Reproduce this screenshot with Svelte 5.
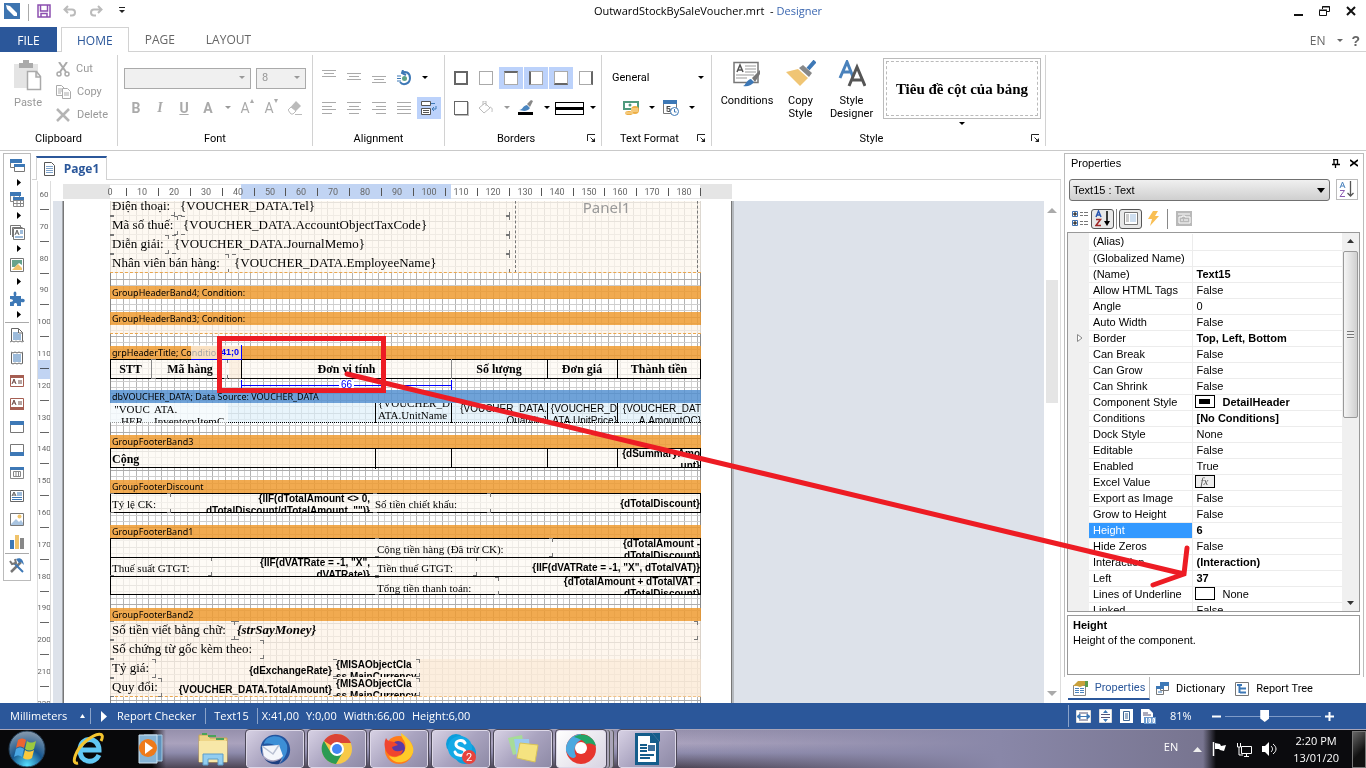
<script lang="ts">
  type Item = {
    text: string;
    x: number;
    y: number;
    w: number;
    h: number;
    kind?: string;
  };

  type Band = {
    name: string;
    gap: number;
    body: number;
    tone?: string;
    boxed?: boolean;
    items: Item[];
  };

  const bands: Band[] = [
    { name: 'GroupHeaderBand4; Condition:', gap: 13, body: 0, items: [] },
    { name: 'GroupHeaderBand3; Condition:', gap: 13, body: 9, items: [] },
    {
      name: 'grpHeaderTitle; Condition:', gap: 12, body: 20, boxed: true,
      items: [
        { text: 'STT', x: 0, y: 0, w: 42, h: 20, kind: 'title soft' },
        { text: 'Mã hàng', x: 42, y: 0, w: 76, h: 20, kind: 'title marks' },
        { text: '', x: 119, y: 0, w: 12, h: 20, kind: 'empty' },
        { text: 'Đơn vị tính', x: 131, y: 0, w: 211, h: 20, kind: 'title soft first' },
        { text: 'Số lượng', x: 341, y: 0, w: 97, h: 20, kind: 'title line' },
        { text: 'Đơn giá', x: 437, y: 0, w: 71, h: 20, kind: 'title line' },
        { text: 'Thành tiền', x: 507, y: 0, w: 84, h: 20, kind: 'title' }
      ]
    },
    {
      name: 'dbVOUCHER_DATA; Data Source: VOUCHER_DATA', gap: 11, body: 20, tone: 'data',
      items: [
        { text: '"VOUC HER', x: 0, y: 0, w: 42, h: 20, kind: 'serif center tall' },
        { text: 'ATA. InventoryItemC', x: 42, y: 0, w: 76, h: 20, kind: 'serif tall' },
        { text: '{VOUCHER_D ATA.UnitName', x: 265, y: 0, w: 77, h: 20, kind: 'serif up line first' },
        { text: '{VOUCHER_DATA. Quantity}', x: 341, y: 0, w: 97, h: 20, kind: 'sans line' },
        { text: '{VOUCHER_D ATA.UnitPrice}', x: 437, y: 0, w: 71, h: 20, kind: 'sans line' },
        { text: '{VOUCHER_DAT A.AmountOC}', x: 507, y: 0, w: 84, h: 20, kind: 'sans' }
      ]
    },
    {
      name: 'GroupFooterBand3', gap: 12, body: 20, boxed: true,
      items: [
        { text: 'Cộng', x: 0, y: 1, w: 266, h: 20, kind: 'total line' },
        { text: '', x: 265, y: 0, w: 77, h: 20, kind: 'line' },
        { text: '', x: 341, y: 0, w: 97, h: 20, kind: 'line' },
        { text: '', x: 437, y: 0, w: 71, h: 20, kind: 'line' },
        { text: '{dSummaryAmo unt}', x: 507, y: 0, w: 84, h: 20, kind: 'bold' }
      ]
    },
    {
      name: 'GroupFooterDiscount', gap: 12, body: 20, boxed: true,
      items: [
        { text: 'Tỷ lệ CK:', x: 0, y: 0, w: 61, h: 20, kind: 'small marks' },
        { text: '{IIF(dTotalAmount <> 0, dTotalDiscount/dTotalAmount, "")}', x: 61, y: 0, w: 200, h: 20, kind: 'bold' },
        { text: 'Số tiền chiết khấu:', x: 263, y: 0, w: 118, h: 20, kind: 'small marks' },
        { text: '{dTotalDiscount}', x: 381, y: 0, w: 210, h: 20, kind: 'bold mid' }
      ]
    },
    {
      name: 'GroupFooterBand1', gap: 12, body: 57, boxed: true,
      items: [
        { text: 'Cộng tiền hàng (Đã trừ CK):', x: 265, y: 0, w: 178, h: 19, kind: 'small marks bound' },
        { text: '{dTotalAmount - dTotalDiscount}', x: 443, y: 0, w: 148, h: 19, kind: 'bold' },
        { text: 'Thuế suất GTGT:', x: 0, y: 19, w: 102, h: 19, kind: 'small marks' },
        { text: '{IIF(dVATRate = -1, "X", dVATRate)}', x: 132, y: 19, w: 129, h: 19, kind: 'bold' },
        { text: 'Tiền thuế GTGT:', x: 265, y: 19, w: 102, h: 19, kind: 'small marks' },
        { text: '{IIF(dVATRate = -1, "X", dTotalVAT)}', x: 367, y: 19, w: 224, h: 19, kind: 'bold mid' },
        { text: '', x: 0, y: 19, w: 591, h: 20, kind: 'row' },
        { text: 'Tổng tiền thanh toán:', x: 265, y: 39, w: 124, h: 18, kind: 'small marks' },
        { text: '{dTotalAmount + dTotalVAT - dTotalDiscount}', x: 389, y: 38, w: 202, h: 18, kind: 'bold' }
      ]
    },
    {
      name: 'GroupFooterBand2', gap: 13, body: 76,
      items: [
        { text: 'Số tiền viết bằng chữ:', x: 0, y: 0, w: 125, h: 19, kind: 'field marks' },
        { text: '{strSayMoney}', x: 125, y: 0, w: 463, h: 19, kind: 'field say marks' },
        { text: 'Số chứng từ gốc kèm theo:', x: 0, y: 19, w: 154, h: 19, kind: 'field marks' },
        { text: 'Tỷ giá:', x: 0, y: 38, w: 46, h: 19, kind: 'field marks' },
        { text: '{dExchangeRate}', x: 46, y: 39, w: 177, h: 19, kind: 'bold mid' },
        { text: '{MISAObjectCla ss.MainCurrency', x: 223, y: 38, w: 87, h: 18, kind: 'bold left marks' },
        { text: '', x: 310, y: 38, w: 281, h: 38, kind: 'empty' },
        { text: 'Quy đổi:', x: 0, y: 57, w: 52, h: 19, kind: 'field marks' },
        { text: '{VOUCHER_DATA.TotalAmount}', x: 52, y: 58, w: 171, h: 19, kind: 'bold mid' },
        { text: '{MISAObjectCla ss.MainCurrency', x: 223, y: 57, w: 87, h: 18, kind: 'bold left marks' }
      ]
    }
  ];

  const fields = [
    { label: 'Điện thoại:', value: '{VOUCHER_DATA.Tel}', x: 68 },
    { label: 'Mã số thuế:', value: '{VOUCHER_DATA.AccountObjectTaxCode}', x: 71 },
    { label: 'Diễn giải:', value: '{VOUCHER_DATA.JournalMemo}', x: 62 },
    { label: 'Nhân viên bán hàng:', value: '{VOUCHER_DATA.EmployeeName}', x: 122 }
  ];

  const properties = [
    ['(Alias)', ''],
    ['(Globalized Name)', ''],
    ['(Name)', 'Text15', 'b'],
    ['Allow HTML Tags', 'False'],
    ['Angle', '0'],
    ['Auto Width', 'False'],
    ['Border', 'Top, Left, Bottom', 'b'],
    ['Can Break', 'False'],
    ['Can Grow', 'False'],
    ['Can Shrink', 'False'],
    ['Component Style', 'DetailHeader', 'b', 'style'],
    ['Conditions', '[No Conditions]', 'b'],
    ['Dock Style', 'None'],
    ['Editable', 'False'],
    ['Enabled', 'True'],
    ['Excel Value', '', '', 'fx'],
    ['Export as Image', 'False'],
    ['Grow to Height', 'False'],
    ['Height', '6', 'b'],
    ['Hide Zeros', 'False'],
    ['Interaction', '(Interaction)', 'b'],
    ['Left', '37', 'b'],
    ['Lines of Underline', 'None', '', 'empty'],
    ['Linked', 'False']
  ];

  // one millimetre on the sheet at 81 %
  const mm = 3.19;
  const hTicks = Array.from({ length: 19 }, (_, i) => i * 10);
  const vTicks = Array.from({ length: 17 }, (_, i) => 60 + i * 10);
  const cols = Array.from({ length: 93 }, (_, i) => i);
  const rows = Array.from({ length: 80 }, (_, i) => i);

  const tools = ['bands', 'cross', 'pages', 'image', 'puzzle'];
  const elements = ['header', 'footer', 'texta', 'textb', 'top', 'bottom', 'panel', 'rich', 'picture', 'chart'];
  const edges = ['all', 'none', 'top', 'left', 'bottom', 'right'];
  const apps = ['thunderbird', 'chrome', 'firefox', 'skype', 'notes', 'misa', 'writer'];

  let selected = $state('Height');
</script>

{#snippet caret()}
  <svg class="caret" width="6" height="4" viewBox="0 0 6 4"><path d="M0 0h6L3 3z" fill="currentColor" /></svg>
{/snippet}

{#snippet launcher()}
  <button class="launcher" aria-label="More options">
    <svg width="9" height="9" viewBox="0 0 9 9"><path d="M.5 7V.5H8" fill="none" stroke="#222" /><path d="M3.500 3.500L7 7" stroke="#222" /><path d="M8 4v4H4z" fill="#222" /></svg>
  </button>
{/snippet}

{#snippet lines(kind: string)}
  <svg width="14" height="12" viewBox="0 0 14 12" stroke="#aaa">
    {#if kind === 'short'}
      <path d="M0 1.5h14M2 4.5h10M0 7.5h14" />
    {:else if kind === 'left'}
      <path d="M0 .5h14M0 4.5h10M0 7.5h14M0 11.5h10" />
    {:else if kind === 'center'}
      <path d="M0 .5h14M2 4.5h10M0 7.5h14M2 11.5h10" />
    {:else if kind === 'right'}
      <path d="M0 .5h14M4 4.5h10M0 7.5h14M4 11.5h10" />
    {:else}
      <path d="M0 .5h14M0 4.5h14M0 7.5h14M0 11.5h14" />
    {/if}
  </svg>
{/snippet}

{#snippet tool(name: string)}
  <svg width="16" height="16" viewBox="0 0 16 16" fill="none">
    {#if name === 'bands'}
      <path d="M1.500 9V1.500h11V5" stroke="#777" /><path d="M1 1h12v4H1z" fill="#3d78b6" /><path d="M1.500 5v4.500H5" stroke="#777" />
      <path d="M5.500 6.500h10v7h-10z" fill="#fff" stroke="#777" /><path d="M5 6h11v3H5z" fill="#3d78b6" />
    {:else if name === 'cross'}
      <path d="M1.500 4.500h9v6h-9zM5 4v6" fill="#fff" stroke="#888" /><path d="M1 1h11v4H1zM4 6h11v4H4z" fill="#3d78b6" />
      <path d="M4.500 9.500h10v6h-10zM4 12.500h11M8 9v6M11.500 9v6" fill="#fff" stroke="#888" />
    {:else if name === 'pages'}
      <path d="M1.500 11V1.500h10v3M3.500 13V3.500h10" stroke="#777" /><path d="M4.500 4.500h11v11h-11z" fill="#fff" stroke="#777" />
      <path d="M6 11l2-5 2 5M7 9h2" stroke="#666" /><path d="M11 7h3M11 9h3M6 13h8" stroke="#3d78b6" />
    {:else if name === 'image'}
      <path d="M1.500 1.500h13v13h-13z" fill="#fff" stroke="#777" /><path d="M3 3h10v5L10 6 6 10H3z" fill="#66a38c" /><path d="M3 13l6-6 4 4v2z" fill="#f0c36b" />
    {:else if name === 'puzzle'}
      <path d="M1 6h4c-2-6 4-6 2 0h5v3c5-2 5 5 0 3v4H8c1-4-4-4-3 0H1v-4c4 0 4-3 0-3z" fill="#3d78b6" />
    {:else if name === 'header'}
      <path d="M2.500 14V1.500h7l4 4V14M9.500 2v4H14" stroke="#666" /><path d="M4 6h5M4 8h8M4 10h8M4 12h8" stroke="#3d78b6" /><path d="M1 15l2-1 2 1 2-1 2 1 2-1 2 1 2-1" stroke="#777" />
    {:else if name === 'footer'}
      <path d="M2.500 3v10M13.500 3v10M2 2l2 1 2-1 2 1 2-1 2 1 2-1M2 13l2 1 2-1 2 1 2-1 2 1 2-1" stroke="#666" /><path d="M4 5h8M4 7h8M4 9h8M4 11h8" stroke="#3d78b6" />
    {:else if name === 'texta' || name === 'textb'}
      <path d="M1.500 2.500h13v11h-13z" fill="#fff" stroke="#a65e52" /><path d={name === 'texta' ? 'M1 2h14v3H1z' : 'M1 11h14v3H1z'} fill="#a65e52" />
      <path d={name === 'texta' ? 'M3 11l2-5 2 5M4 9h2M9 8h4M9 10h4' : 'M3 9l2-5 2 5M4 7h2M9 6h4M9 8h4'} stroke="#6d4a45" />
    {:else if name === 'top' || name === 'bottom'}
      <path d="M1.500 2.500h13v11h-13z" fill="#fff" stroke="#777" /><path d={name === 'top' ? 'M1 2h14v4H1z' : 'M1 10h14v4H1z'} fill="#3d78b6" />
    {:else if name === 'panel'}
      <path d="M1.500 2.500h13v11h-13zM4.500 6.500h7v5h-7zM7 6v5M9.500 6v5" fill="#fff" stroke="#888" /><path d="M1 2h14v3H1z" fill="#3d78b6" />
    {:else if name === 'rich'}
      <path d="M1.500 2.500h13v11h-13z" fill="#fff" stroke="#666" /><path d="M3 8l2-4 2 4M4 7h2" stroke="#555" /><path d="M8 5h5M8 7h5M3 9.500h10M3 11.500h10" stroke="#3d78b6" />
    {:else if name === 'picture'}
      <path d="M1.500 2.500h13v12h-13z" fill="#fff" stroke="#777" /><circle cx="10.500" cy="5.500" r="2" fill="#f0c36b" /><path d="M2 13l5-5 3 3 2-2 2 3v2H2z" fill="#a9c4e0" />
    {:else if name === 'chart'}
      <path d="M1 6h4v9H1z" fill="#3d78b6" /><path d="M6 1h4v14H6z" fill="#f0c36b" /><path d="M11 4h4v11h-4z" fill="#888" />
    {:else}
      <path d="M2 14L12 4" stroke="#777" stroke-width="2.500" /><path d="M5 5l9 9" stroke="#3d78b6" stroke-width="2" /><path d="M7 1c5-2 7 1 8 6l-3-3-2 1z" fill="#3d78b6" /><path d="M1 3l2 3 4-1-1-4" stroke="#777" stroke-width="2" />
    {/if}
  </svg>
{/snippet}

{#snippet app(name: string)}
  <svg width="32" height="32" viewBox="0 0 32 32">
    {#if name === 'thunderbird'}
      <path d="M10 3c9-4 20 1 21 12 1 8-4 14-11 16 3-3 5-6 5-9L4 14c-1 4-1 7 1 11C-1 17 1 8 10 3z" fill="#24549e" />
      <path d="M9 5c8-4 16-1 19 7 1 6-1 11-5 16-1-6-2-12-6-15-3-2-7-3-12-2 0-2 2-5 4-6z" fill="#3d8fd6" />
      <path d="M3 13l17-1 4 11c-4 5-14 6-19 0z" fill="#f4f6fb" /><path d="M3 13l11 8 6-9" fill="none" stroke="#b9c0d2" stroke-width="1.500" />
      <path d="M5 25c5 5 12 5 18 0l-3 6c-6 1-12-1-15-6z" fill="#1d3f80" />
    {:else if name === 'chrome'}
      <circle cx="16" cy="16" r="15" fill="#f7c948" /><path d="M16 16L3 8C9-2 25-1 30 10H16z" fill="#db4437" />
      <path d="M3 8C-3 17 3 30 15 31l7-12-12 1z" fill="#2b9b53" /><circle cx="16" cy="16" r="7" fill="#fff" /><circle cx="16" cy="16" r="5" fill="#4285f4" />
    {:else if name === 'firefox'}
      <circle cx="16" cy="17" r="14" fill="#ff7b1a" /><path d="M18 0c10 7 15 15 11 22-5 9-18 10-23 1 9 4 19-3 16-13-1-4-4-5-4-10z" fill="#ffc928" />
      <circle cx="15" cy="15" r="7" fill="#5a3aa5" /><path d="M3 5c2 4 5 3 8 4l4 3-6 2c1 5 6 5 11 3-2 8-13 9-17 1-2-5-2-9 0-13z" fill="#f0452e" />
    {:else if name === 'skype'}
      <circle cx="11" cy="11" r="10" fill="#0c9ddb" /><circle cx="20" cy="20" r="11" fill="#0c9ddb" /><circle cx="15" cy="15" r="12" fill="#14a9e6" />
      <path d="M20 10c-2-4-10-3-9 2s9 2 9 7c-1 5-9 4-10 0" fill="none" stroke="#fff" stroke-width="3" stroke-linecap="round" />
      <circle cx="24" cy="24" r="7" fill="#e8433c" /><text x="24" y="28" text-anchor="middle" class="badge">2</text>
    {:else if name === 'notes'}
      <path d="M1 5l14-3 3 16-12 4z" fill="#a7dc97" /><path d="M7 6h15l1 16-13 3z" fill="#9cc9ed" /><path d="M13 10l18 2-3 17-18-4z" fill="#f5e380" stroke="#d9c456" />
    {:else if name === 'misa'}
      <circle cx="16" cy="16" r="15" fill="#e7352d" /><path d="M16 1c-9 0-16 8-15 17 3 7 8 9 10 5-3-7-1-13 5-16z" fill="#4ba8df" />
      <path d="M9 4c8-6 20-1 22 9-6-4-9-2-10-2C18 7 13 5 9 4z" fill="#22a567" /><circle cx="16" cy="15" r="6" fill="#fff" />
    {:else if name === 'writer'}
      <path d="M4 0h17l7 8v24H4z" fill="#155d8b" /><path d="M7 3h12v7h6v19H7z" fill="#fff" /><path d="M21 0h8v9z" fill="#155d8b" />
      <path d="M9 12h7M9 15h7M9 18h7M9 22h14M9 25h10" stroke="#155d8b" stroke-width="2" /><path d="M17 12h7v6h-7z" fill="#3a6f9c" />
    {/if}
  </svg>
{/snippet}

<div class="window">
  <header class="titlebar">
    <div class="quick">
      <svg width="16" height="16" viewBox="0 0 16 16"><path d="M0 0h16v16H0z" fill="#3d74b0" /><path d="M2 2l4 1 7 7 0 3-3 0-7-7z" fill="#fff" /></svg>
      <i class="split"></i>
      <button aria-label="Save">
        <svg width="14" height="14" viewBox="0 0 14 14" fill="none" stroke="#8c4fb0" stroke-width="1.500"><path d="M1 1h12v12H1zM3.500 1v6h7V1M4 13V9.500h6V13" /></svg>
      </button>
      <button aria-label="Undo">
        <svg width="14" height="12" viewBox="0 0 14 12" fill="none" stroke="#bbb" stroke-width="2"><path d="M5 1L1.500 4.500 5 8M2 4.500h7c4 0 4 6 0 6H7" /></svg>
      </button>
      <button aria-label="Redo">
        <svg width="14" height="12" viewBox="0 0 14 12" fill="none" stroke="#bbb" stroke-width="2"><path d="M9 1l3.500 3.500L9 8M12 4.500H5c-4 0-4 6 0 6h2" /></svg>
      </button>
      <button class="more" aria-label="Customize">
        <svg width="6" height="7" viewBox="0 0 6 7"><path d="M0 .5h6" stroke="#222" /><path d="M0 3h6L3 6z" fill="#222" /></svg>
      </button>
    </div>
    <h1>OutwardStockBySaleVoucher.mrt <span>&nbsp;- <em>Designer</em></span></h1>
    <div class="controls">
      <button aria-label="Minimize"><svg width="9" height="10" viewBox="0 0 9 10"><path d="M0 9h9" stroke="#111" stroke-width="2" /></svg></button>
      <button aria-label="Restore"><svg width="11" height="10" viewBox="0 0 11 10" fill="none" stroke="#111"><path d="M3.500 3V.5h7v5H8M3 1h8M.5 4.500h7v5h-7zM0 4h8" /></svg></button>
      <button aria-label="Close"><svg width="10" height="10" viewBox="0 0 10 10"><path d="M1 1l8 8M9 1L1 9" stroke="#111" stroke-width="2" /></svg></button>
    </div>
  </header>

  <nav class="tabs">
    <button class="file">FILE</button>
    <button class="home">HOME</button>
    <button>PAGE</button>
    <button>LAYOUT</button>
    <div class="lang"><button>EN</button>{@render caret()}<button class="help">?</button></div>
  </nav>

  <section class="ribbon">
    <div class="group clipboard">
      <div class="group-body">
        <button class="big muted">
          <svg width="30" height="32" viewBox="0 0 30 32"><path d="M1 4h24v24H1z" fill="#e4e4e4" /><path d="M6 3h4V0h6v3h4v5H6z" fill="#aaa" /><path d="M14.500 11.500h9l4 5v13h-13zM23 12v5h5" fill="#fff" stroke="#aaa" stroke-width="1.500" /></svg>
          Paste
        </button>
        <div class="stack">
          <button><svg width="14" height="15" viewBox="0 0 14 15" fill="none" stroke="#aaa" stroke-width="1.500"><path d="M3 0l7 10M11 0L4 10" stroke-width="2" /><circle cx="3" cy="12" r="2" /><circle cx="11" cy="12" r="2" /></svg>Cut</button>
          <button><svg width="15" height="14" viewBox="0 0 15 14" fill="#fff" stroke="#aaa"><path d="M.5.5h5l3 3v7h-8zM2 4h4M2 6h4M2 8h3" /><path d="M6.500 3.500h5l3 3v7h-8zM8 8h5M8 10h5" /></svg>Copy</button>
          <button><svg width="15" height="14" viewBox="0 0 15 14" stroke="#b4b4b4" stroke-width="2.500"><path d="M1 1l12 12M13 1L1 13" /></svg>Delete</button>
        </div>
      </div>
      <footer>Clipboard</footer>
    </div>

    <div class="group font">
      <div class="group-rows">
        <div class="row">
          <button class="combo wide" aria-label="Font name"><span></span>{@render caret()}</button>
          <button class="combo narrow" aria-label="Font size"><span>8</span>{@render caret()}</button>
        </div>
        <div class="row glyphs">
          <button><b>B</b></button>
          <button><b class="it">I</b></button>
          <button><b class="un">U</b></button>
          <button><b>A</b></button>
          <span class="drop">{@render caret()}</span>
          <button>A<sup>▴</sup></button>
          <button>A<sup>▾</sup></button>
          <button aria-label="Clear"><svg width="14" height="14" viewBox="0 0 14 14"><path d="M0 9l8-9 5 5-8 8H3z" fill="#bbb" /><path d="M0 9l3-3 5 4-3 3H3z" fill="#fff" stroke="#bbb" /><path d="M7 13.500h7" stroke="#bbb" /></svg></button>
        </div>
      </div>
      <footer>Font</footer>
    </div>

    <div class="group align">
      <div class="group-rows">
        <div class="row cells">
          <button class="up" aria-label="Top">{@render lines('short')}</button>
          <button aria-label="Middle">{@render lines('short')}</button>
          <button class="down" aria-label="Bottom">{@render lines('short')}</button>
          <button aria-label="Rotate"><svg width="15" height="16" viewBox="0 0 15 16" fill="none"><path d="M3 12c3 4 10 2 10-4S8 1 5 3M6 0L5 3l4 2" stroke="#3d78b6" stroke-width="2" /><path d="M0 6h4M0 8.500h4M0 11h4" stroke="#3d78b6" /><circle cx="7.500" cy="8.500" r="2.500" fill="#5fa287" /></svg></button>
          <span class="drop dark">{@render caret()}</span>
        </div>
        <div class="row cells">
          <button aria-label="Left">{@render lines('left')}</button>
          <button aria-label="Center">{@render lines('center')}</button>
          <button aria-label="Right">{@render lines('right')}</button>
          <button aria-label="Justify">{@render lines('full')}</button>
          <button class="on" aria-label="Word wrap"><svg width="16" height="16" viewBox="0 0 16 16" fill="none"><path d="M.5 1.500h9v4h-9zM.5 8.500h9v6h-9z" fill="#fff" stroke="#555" /><path d="M2 10.500h6M2 12.500h6" stroke="#555" /><path d="M10 3.500h4M15 6v3h-4M13 7l-2 2 2 2" stroke="#3d78b6" /></svg></button>
        </div>
      </div>
      <footer>Alignment</footer>
    </div>

    <div class="group borders">
      <div class="group-rows">
        <div class="row cells">
          {#each edges as edge}
            <button class:on={['top', 'left', 'bottom'].includes(edge)} aria-label="Border {edge}"><i class="edge {edge}"></i></button>
          {/each}
        </div>
        <div class="row cells">
          <button aria-label="Shadow"><i class="edge shadow"></i></button>
          <button aria-label="Fill"><svg width="16" height="14" viewBox="0 0 16 14" fill="none" stroke="#bbb"><path d="M1 7l6-5 5 5-6 5zM5 4V0h3v5M12 6c3 1 2 3 2 5" /></svg></button>
          <span class="drop">{@render caret()}</span>
          <button class="pen" aria-label="Border color"><svg width="16" height="16" viewBox="0 0 16 16"><path d="M1 10c4 0 3-4 8-5l3 3c-3 4-7 3-11 2z" fill="#4a86c0" /><path d="M9 4l4-4 2 1-3 6z" fill="#888" /><path d="M0 12h15v3H0z" fill="#000" /></svg></button>
          <span class="drop dark">{@render caret()}</span>
          <button class="stroke" aria-label="Border style"><i></i></button>
          <span class="drop dark">{@render caret()}</span>
        </div>
      </div>
      <footer class="with-launcher">Borders{@render launcher()}</footer>
    </div>

    <div class="group format">
      <div class="group-rows">
        <button class="row general"><span>General</span>{@render caret()}</button>
        <div class="row cells">
          <button aria-label="Currency"><svg width="16" height="15" viewBox="0 0 16 15"><path d="M1 1h14v7H1z" fill="#fff" stroke="#4f9a7d" stroke-width="2" /><circle cx="7" cy="4" r="1.500" fill="#4f9a7d" /><ellipse cx="6" cy="12" rx="4" ry="2" fill="#edae43" /><ellipse cx="12" cy="9" rx="4" ry="4" fill="#edae43" /><path d="M8 8h7M8 10h7M2 12h8" stroke="#fbe2b0" /></svg></button>
          <span class="drop dark">{@render caret()}</span>
          <button aria-label="Date"><svg width="16" height="16" viewBox="0 0 16 16"><path d="M.5 1.500h13v12H.5z" fill="#fff" stroke="#777" /><path d="M0 0h14v4H0z" fill="#3d78b6" /><text x="3" y="12" class="five">5</text><circle cx="11.500" cy="11.500" r="4" fill="#fff" stroke="#3d78b6" /><path d="M11.500 9v3h2" fill="none" stroke="#3d78b6" /></svg></button>
          <span class="drop dark">{@render caret()}</span>
        </div>
      </div>
      <footer class="with-launcher">Text Format{@render launcher()}</footer>
    </div>

    <div class="group style">
      <div class="group-body">
        <button class="big">
          <svg width="28" height="28" viewBox="0 0 28 28"><path d="M1 2.500h24v20H1z" fill="#fff" stroke="#777" stroke-width="1.500" /><path d="M4 12l3-7 3 7M5 10h4" fill="none" stroke="#555" stroke-width="1.500" /><path d="M12 6h11M12 9h11M12 12h11M3 15h18M3 18h11" stroke="#999" /><path d="M10 26c3-1 3-6 8-7l3 3c-3 4-7 5-11 4z" fill="#3d78b6" /><path d="M19 18l8-8v4l-5 8z" fill="#777" /></svg>
          Conditions
        </button>
        <button class="big">
          <svg width="30" height="28" viewBox="0 0 30 28"><path d="M29 1L22 9" stroke="#3d78b6" stroke-width="4" /><path d="M17 5l9 8-3 4-10-9z" fill="#888" /><path d="M0 12l12-3 10 9-8 8z" fill="#f0c574" /></svg>
          Copy Style
        </button>
        <button class="big">
          <svg width="28" height="28" viewBox="0 0 28 28" fill="none" stroke-width="3"><path d="M2 18L9 2l6 15M5 12h7" stroke="#4a82bc" /><path d="M11 26l8-19 8 19M14 20h10" stroke="#555" /></svg>
          Style Designer
        </button>
        <div class="gallery">
          <button>Tiêu đề cột của bảng</button>
          {@render caret()}
        </div>
      </div>
      <footer class="with-launcher">Style{@render launcher()}</footer>
    </div>
  </section>

  <main>
    <aside class="toolbox">
      {#each tools as name}
        <button aria-label={name}>{@render tool(name)}</button>
        <svg class="fly" width="4" height="7" viewBox="0 0 4 7"><path d="M0 0l4 3.500L0 7z" fill="#000" /></svg>
      {/each}
      <hr />
      {#each elements as name}
        <button class="element" aria-label={name}>{@render tool(name)}</button>
      {/each}
      <hr />
      <button class="element" aria-label="Setup">{@render tool('setup')}</button>
    </aside>

    <section class="designer">
      <div class="page-tabs">
        <button>
          <svg width="11" height="14" viewBox="0 0 11 14"><path d="M.5.5h7l3 3v10H.5z" fill="#fff" stroke="#555" /><path d="M2 4.500h7M2 6.500h7M2 8.500h7M2 10.500h7" stroke="#7ea3cb" /></svg>
          Page1
        </button>
      </div>
      <div class="editor">
        <div class="vruler">
          {#each vTicks as tick}
            <div><span>{tick}</span><i></i></div>
          {/each}
          <b></b>
        </div>
        <div class="surface">
          <div class="hruler">
            <div class="margin"></div>
            <div class="scale">
              <b></b>
              {#each hTicks as tick}
                <span style="left: {Math.round(tick * mm)}px">{tick}</span>
                <i style="left: {Math.round((tick + 5) * mm)}px"></i>
              {/each}
            </div>
            <div class="margin end"></div>
          </div>
          <div class="desk">
            <div class="sheet">
              <div class="content">
                <svg class="grid" width="589" height="510">
                  {#each cols as i}
                    <path d="M{Math.round(i * mm * 2) - 0.5} 0v510" stroke={i % 2 ? '#d4d4d4' : '#b4b4b4'} />
                  {/each}
                  {#each rows as i}
                    <path d="M0 {Math.round(i * mm * 2) + 1.5}h591" stroke={i % 3 ? '#cecece' : '#adadad'} />
                  {/each}
                </svg>

                <div class="intro">
                  {#each fields as field, i}
                    <div class="field marks" style="top: {i * 19 - 4}px; width: {field.x - 3}px">{field.label}</div>
                    <div class="field marks" style="top: {i * 19 - 4}px; left: {field.x}px; width: {400 - field.x}px">{field.value}</div>
                  {/each}
                  <div class="panel">Panel1</div>
                </div>

                {#each bands as band}
                  <div class="band {band.tone ?? ''}" class:boxed={band.boxed} style="margin-top: {band.gap}px">
                    <div class="band-head">{band.name}</div>
                    {#if band.body}
                      <div class="band-body" style="height: {band.body}px">
                        {#each band.items as item}
                          <div class="item {item.kind ?? ''}" style="left: {item.x}px; top: {item.y}px; width: {item.w}px; height: {item.h}px">
                            <span>{item.text}</span>
                          </div>
                        {/each}
                        {#if band.name.startsWith('grp')}
                          <div class="position">41;0</div>
                          <div class="measure"><span>66</span></div>
                        {/if}
                      </div>
                    {/if}
                  </div>
                {/each}
              </div>
            </div>
          </div>
        </div>
        <div class="vscroll">
          <svg width="10" height="6" viewBox="0 0 10 6"><path d="M0 6l5-5 5 5z" fill="#aaa" /></svg>
          <i></i>
          <svg width="10" height="6" viewBox="0 0 10 6"><path d="M0 0l5 5 5-5z" fill="#aaa" /></svg>
        </div>
      </div>
    </section>

    <aside class="props">
      <div class="props-box">
        <div class="props-title">
          <h2>Properties</h2>
          <button aria-label="Pin"><svg width="8" height="9" viewBox="0 0 8 9"><path d="M2 0v5M5.500 0v5M1 .5h5M0 5.500h8M3.500 6v3" stroke="#000" stroke-width="1.300" /></svg></button>
          <button aria-label="Close panel"><svg width="8" height="8" viewBox="0 0 8 8"><path d="M0 1l8 6M8 1L0 7" stroke="#000" stroke-width="1.600" /></svg></button>
        </div>
        <div class="picker">
          <div class="select-wrap">
            <select aria-label="Component"><option>Text15 : Text</option></select>
            <svg width="8" height="5" viewBox="0 0 8 5"><path d="M0 0h8L4 5z" fill="#000" /></svg>
          </div>
          <button aria-label="Sort"><svg width="16" height="17" viewBox="0 0 16 17" fill="none"><path d="M1 7l2.500-6L6 7M2 5h3" stroke="#4b83bd" /><path d="M1 9.500h4.500L1 15.500h5" stroke="#8c5ab0" /><path d="M11.500 0v15M8.500 12l3 3 3-3" stroke="#555" stroke-width="1.300" /></svg></button>
        </div>
        <div class="props-tools">
          <button aria-label="Categorized"><svg width="18" height="17" viewBox="0 0 18 17"><path d="M1.500 1.500h5v5h-5zM1.500 10.500h5v5h-5z" fill="#fff" stroke="#3c6fb0" /><path d="M2 4h4M4 2v4M2 13h4M4 11v4" stroke="#000" /><path d="M9 2.500h3M9 5.500h3M9 11.500h3M9 14.500h3M13 2.500h4M13 5.500h4M13 11.500h4M13 14.500h4" stroke="#777" /></svg></button>
          <button class="pressed" aria-label="Alphabetical"><svg width="16" height="17" viewBox="0 0 16 17" fill="none"><path d="M1 7l2.500-6L6 7M2 5h3" stroke="#2b57b0" stroke-width="1.500" /><path d="M1 9.500h4.500L1 15.500h5" stroke="#a02828" stroke-width="1.500" /><path d="M12 1v13" stroke="#000" stroke-width="1.500" /><path d="M9 11h6l-3 5z" fill="#000" /></svg></button>
          <i></i>
          <button class="pressed" aria-label="Properties list"><svg width="14" height="13" viewBox="0 0 14 13"><path d="M.5.5h13v12H.5z" fill="#fff" stroke="#777" /><path d="M2 3h3M2 5h3M2 7h3M2 9h3" stroke="#999" /><path d="M6 3h6M6 5h6M6 7h6M6 9h6" stroke="#9dbde0" /></svg></button>
          <button aria-label="Events"><svg width="11" height="15" viewBox="0 0 11 15"><path d="M5 0h5L7 5h4L2 15l2-7H0z" fill="#f9bf54" /></svg></button>
          <i></i>
          <button aria-label="Property pages"><svg width="16" height="15" viewBox="0 0 16 15"><path d="M0 0h16v15H0z" fill="#b9b9b9" /><path d="M2 3h12M3 12V6h3v-1h3v1h5v6z" stroke="#fff" fill="none" /><path d="M5 9h2M8 9h4" stroke="#fff" /></svg></button>
        </div>
        <div class="sheet-grid">
          <div class="table-clip">
            <table>
              <tbody>
                {#each properties as [name, value, weight, extra]}
                  <tr class:selected={selected === name} onclick={() => (selected = name)}>
                    <td class="gutter">{#if name === 'Border'}<svg width="6" height="8" viewBox="0 0 6 8"><path d="M.5.5L5 4 .5 7.500z" fill="#fff" stroke="#888" /></svg>{/if}</td>
                    <th scope="row">{name}</th>
                    <td class:strong={weight === 'b'}>
                      {#if extra}<span class="swatch {extra}">{extra === 'fx' ? 'fx' : ''}</span>{/if}{value}
                    </td>
                  </tr>
                {/each}
              </tbody>
            </table>
          </div>
          <div class="pscroll">
            <svg width="7" height="4" viewBox="0 0 7 4"><path d="M0 4l3.500-4L7 4z" fill="#333" /></svg>
            <i></i>
            <svg width="7" height="4" viewBox="0 0 7 4"><path d="M0 0l3.500 4L7 0z" fill="#333" /></svg>
          </div>
        </div>
        <div class="about"><b>Height</b><p>Height of the component.</p></div>
      </div>
      <div class="props-tabs">
        <button class="current"><svg width="16" height="16" viewBox="0 0 16 16"><path d="M1.500 5.500h12v10h-12z" fill="#fff" stroke="#888" /><path d="M3 8.500h4M3 10.500h4M3 12.500h4M8 8.500h4M8 10.500h4M8 12.500h4" stroke="#4b83bd" /><path d="M1 6l5-5 7 0v4L8 7 5 6z" fill="#c9a13c" /><path d="M13 1h3v6h-3z" fill="#5a9b4a" /></svg>Properties</button>
        <button><svg width="13" height="13" viewBox="0 0 13 13"><path d="M4.500 1.500h8v7h-8zM.5 5.500h7v7h-7z" fill="#fff" stroke="#777" /><path d="M4 0h9v4H4zM0 4h8v3H0z" fill="#3d78b6" /><path d="M2 10h4" stroke="#3d78b6" /></svg>Dictionary</button>
        <button><svg width="14" height="14" viewBox="0 0 14 14"><path d="M.5.5h13v13H.5z" fill="#fff" stroke="#777" /><path d="M2 3h5M4.500 3v8M5 6.500h6M5 10.500h6" stroke="#3d78b6" stroke-width="2" fill="none" /></svg>Report Tree</button>
      </div>
    </aside>
  </main>

  <footer class="status">
    <button class="unit">Millimeters <svg width="5" height="4" viewBox="0 0 5 4"><path d="M0 4l2.500-4L5 4z" fill="#fff" /></svg></button>
    <button class="checker"><svg width="6" height="11" viewBox="0 0 6 11"><path d="M0 0l6 5.500L0 11z" fill="#fff" /></svg>Report Checker</button>
    <span class="object">Text15</span>
    <span class="coords"><span>X:41,00</span><span>Y:0,00</span><span>Width:66,00</span><span>Height:6,00</span></span>
    <div class="zoom">
      <button aria-label="Page width"><svg width="15" height="13" viewBox="0 0 15 13"><path d="M.5.500h14v12H.5z" fill="#fff" stroke="#ddd" /><path d="M3 3h9M3 10h9" stroke="#557" /><path d="M1 6.500L4 4v5zM14 6.500L11 4v5zM4 6.500h7" fill="#3d78b6" stroke="#3d78b6" /></svg></button>
      <button aria-label="Page height"><svg width="13" height="14" viewBox="0 0 13 14"><path d="M.5.500h12v13H.5z" fill="#fff" stroke="#ddd" /><path d="M2 5.500h9M2 8.500h9" stroke="#557" /><path d="M6.500 1L9 4H4zM6.500 13L9 10H4z" fill="#3d78b6" /></svg></button>
      <button aria-label="Whole page"><svg width="13" height="14" viewBox="0 0 13 14"><path d="M0 0h13v14H0z" fill="#fff" /><path d="M3.500 2.500h6v9h-6zM5 5h3M5 7h3M5 9h3" fill="none" stroke="#3d6594" /></svg></button>
      <button aria-label="Actual size"><svg width="15" height="15" viewBox="0 0 15 15"><path d="M0 0h8l4 4v10H0z" fill="#fff" /><path d="M2 4h5M2 6h8" stroke="#557" /><path d="M3 8h12v7H3z" fill="#6c9bd0" /><path d="M5.500 9v5M8 9.500h1.500v4H8zM12 9.500h1.500v4H12z" stroke="#fff" fill="none" /></svg></button>
      <output>81%</output>
      <button aria-label="Zoom out"><svg width="9" height="9" viewBox="0 0 9 9"><path d="M0 4.500h9" stroke="#fff" stroke-width="2" /></svg></button>
      <input type="range" min="0" max="200" value="81" aria-label="Zoom" />
      <button aria-label="Zoom in"><svg width="9" height="9" viewBox="0 0 9 9"><path d="M0 4.500h9M4.500 0v9" stroke="#fff" stroke-width="2" /></svg></button>
    </div>
  </footer>

  <footer class="taskbar">
    <button class="pin" aria-label="Start">
      <svg width="38" height="38" viewBox="0 0 38 38"><defs><radialGradient id="orb" cx="50%" cy="95%" r="90%"><stop offset="0" stop-color="#57e0ff" /><stop offset="0.500" stop-color="#17568e" /><stop offset="1" stop-color="#7f95ab" /></radialGradient></defs><circle cx="19" cy="19" r="18" fill="url(#orb)" stroke="#223b52" /><path d="M10 10c3-2 5-2 8 0l-2 8c-3-2-5-2-8 0z" fill="#ec6432" /><path d="M19 11c3 2 5 2 9 0l-2 8c-3 2-6 2-9 0z" fill="#9bc93f" /><path d="M8 19c3-2 5-2 8 0l-2 8c-3-2-5-2-8 0z" fill="#4aa7e4" /><path d="M17 20c3 2 5 2 9 0l-2 8c-3 2-6 2-9 0z" fill="#fbc93c" /></svg>
    </button>
    <button class="pin" aria-label="Internet Explorer">
      <svg width="34" height="36" viewBox="0 0 34 36" fill="none"><path d="M8 19h19c0-14-19-14-19 0 0 14 15 14 19 5" stroke="#62c8f5" stroke-width="5" /><path d="M6 32C-2 34 4 18 14 10S34 0 29 10" stroke="#f5c52f" stroke-width="3" /></svg>
    </button>
    <button class="pin" aria-label="Media Player">
      <svg width="30" height="32" viewBox="0 0 30 32"><path d="M8 2h18v26H8z" fill="#5f93bd" stroke="#a7cbe5" /><path d="M3 2h18v28H3z" fill="#86b4d6" stroke="#cfe4f2" /><circle cx="12" cy="15" r="9" fill="#ee7a1b" /><path d="M9 9l8 6-8 6z" fill="#fff" /></svg>
    </button>
    <button class="pin" aria-label="Explorer">
      <svg width="34" height="34" viewBox="0 0 34 34"><path d="M3 3h9l2 3h17v24H3z" fill="#eed587" stroke="#c7a653" /><path d="M6 2h5M12 4h8M20 7h8" stroke="#4aa35a" stroke-width="2" /><path d="M3 9h28v21H3z" fill="#f7e7a8" /><path d="M7 33V22h20v11h-5v-6H12v6z" fill="#92cdf0" stroke="#5c9cc9" /></svg>
    </button>
    {#each apps as name}
      <button class="task" class:active={name === 'misa'} aria-label={name}>{@render app(name)}</button>
    {/each}
    <div class="tray">
      <span class="en">EN</span>
      <svg width="9" height="5" viewBox="0 0 9 5"><path d="M0 5l4.500-5L9 5z" fill="#eee" /></svg>
      <svg width="15" height="14" viewBox="0 0 15 14"><path d="M1.500 0v14" stroke="#fff" stroke-width="1.500" /><path d="M3 1l5 1 1 2 5-1-2 6-4-1-1-1-4 0z" fill="#fff" /></svg>
      <svg width="15" height="15" viewBox="0 0 15 15" fill="none" stroke="#fff"><path d="M4.500 4.500h10v7h-10zM7 14.500h5M9.500 12v2M.5 1v4h3V1M2 5v8h4" /></svg>
      <svg width="15" height="14" viewBox="0 0 15 14"><path d="M0 4h3l4-4v14l-4-4H0z" fill="#fff" /><path d="M9 4c2 2 2 4 0 6M11 2c4 3 4 7 0 10" fill="none" stroke="#fff" /></svg>
      <time>2:20 PM<br />13/01/20</time>
      <button class="show" aria-label="Show desktop"></button>
    </div>
  </footer>

  <svg class="ink" width="1366" height="768" viewBox="0 0 1366 768" fill="none" stroke="#ed1c24" stroke-width="5">
    <path d="M219.500 338.500h164v52h-164z" />
    <path d="M347 374L1184 574M1187 548L1184 574 1153 585" stroke-linecap="round" />
  </svg>
</div>

<style>
  :global(body) {
    margin: 0;
    overflow: hidden;
  }

  .window {
    position: relative;
    display: flex;
    flex-direction: column;
    height: 100vh;
    background: #fff;
    color: #000;
    font: 11px/14px Roboto, sans-serif;
    overflow: hidden;
  }

  .window * {
    box-sizing: border-box;
  }

  button {
    display: flex;
    align-items: center;
    justify-content: center;
    flex: none;
    padding: 0;
    border: 0;
    background: none;
    color: inherit;
    font: inherit;
  }

  svg {
    display: block;
    flex: none;
  }

  h1, h2, p {
    margin: 0;
    font: inherit;
  }

  /* title bar */
  .titlebar {
    display: grid;
    grid-template-columns: 1fr auto 1fr;
    align-items: center;
    flex: none;
    height: 27px;
    padding: 0 10px 6px 4px;
  }

  .quick {
    display: flex;
    align-items: center;
    gap: 12px;
  }

  .split {
    width: 1px;
    height: 17px;
    margin: 4px -4px 0;
    background: #aaa;
  }

  .more {
    margin-left: 4px;
  }

  h1 {
    padding-left: 56px;
    font: 11px/16px "Open Sans", sans-serif;
  }

  h1 em {
    color: #3a66b0;
    font-style: normal;
  }

  .controls {
    display: flex;
    justify-content: flex-end;
    gap: 16px;
  }

  /* ribbon tabs */
  .tabs {
    display: flex;
    flex: none;
    height: 25px;
    border-bottom: 1px solid #d2d2d2;
    color: #666;
    font: 12px/16px "Open Sans", sans-serif;
  }

  .tabs > button {
    padding: 2px 15px 0;
    margin-right: 1px;
  }

  .tabs .file {
    width: 57px;
    height: 25px;
    margin-right: 4px;
    background: #2b579a;
    color: #fff;
  }

  .tabs .home {
    height: 25px;
    border: 1px solid #d2d2d2;
    border-bottom: 0;
    background: #fff;
    color: #2b579a;
  }

  .lang {
    display: flex;
    align-items: center;
    gap: 12px;
    margin-left: auto;
    padding: 3px 6px 0 0;
  }

  .help {
    margin-left: -4px;
    font: bold 14px/16px "Liberation Sans", sans-serif;
  }

  /* ribbon */
  .ribbon {
    display: flex;
    flex: none;
    height: 99px;
    padding: 3px 0 4px;
    border-bottom: 1px solid #c9c9c9;
  }

  .group {
    display: flex;
    flex-direction: column;
    border-right: 1px solid #d2d2d2;
  }

  .group footer {
    position: relative;
    height: 14px;
    text-align: center;
  }

  .group .with-launcher {
    padding-right: 14px;
  }

  .clipboard { width: 118px; }
  .font { width: 195px; }
  .align { width: 132px; }
  .borders { width: 157px; }
  .format { width: 110px; }
  .style { width: 334px; }

  .launcher {
    position: absolute;
    right: 5px;
    top: 2px;
  }

  .group-body {
    display: flex;
    flex: 1;
  }

  .group-rows {
    display: flex;
    flex-direction: column;
    flex: 1;
    gap: 8px;
    padding: 12px 0 0 6px;
  }

  .row {
    display: flex;
    align-items: center;
    height: 22px;
  }

  .muted, .stack {
    color: #999;
  }

  .big {
    flex-direction: column;
    justify-content: flex-start;
    gap: 6px;
    width: 51px;
    line-height: 13px;
    padding-top: 5px;
  }

  .clipboard .big {
    width: 56px;
    gap: 4px;
  }

  .stack {
    display: flex;
    flex-direction: column;
    gap: 1px;
    padding-top: 3px;
  }

  .stack button {
    gap: 6px;
    height: 22px;
    justify-content: flex-start;
  }

  .combo {
    justify-content: space-between;
    height: 21px;
    padding: 0 5px;
    border: 1px solid #aaa;
    background: #f0f0f0;
    color: #999;
  }

  .wide { width: 127px; margin-right: 5px; }
  .narrow { width: 50px; }

  .glyphs {
    color: #aaa;
    font-size: 14px;
  }

  .glyphs button {
    width: 24px;
    height: 22px;
  }

  .glyphs sup {
    font-size: 8px;
    line-height: 8px;
    align-self: flex-start;
  }

  .it {
    font-family: "Liberation Serif", serif;
    font-style: italic;
  }

  .un {
    text-decoration: underline;
  }

  .drop {
    display: flex;
    justify-content: center;
    flex: none;
    width: 15px;
    color: #999;
  }

  .dark {
    color: #000;
  }

  .cells button {
    width: 24px;
    height: 22px;
    margin-right: 1px;
  }

  .align .group-rows {
    padding-left: 4px;
  }

  .up { padding-bottom: 6px; }
  .down { padding-top: 6px; }

  .on {
    background: #bcd2fb;
  }

  .borders .group-rows {
    padding-left: 4px;
  }

  .edge {
    width: 14px;
    height: 14px;
    border: 1px solid #aaa;
    background: #fff;
  }

  .edge.all { border: 2px solid #666; }
  .edge.top { border-top: 2px solid #666; }
  .edge.left { border-left: 2px solid #666; }
  .edge.bottom { border-bottom: 2px solid #666; }
  .edge.right { border-right: 2px solid #666; }
  .edge.shadow { border-color: #666; box-shadow: 1px 1px 0 #bbb; }

  .borders .stroke {
    width: 30px;
  }

  .stroke i {
    width: 29px;
    height: 13px;
    border: 1px solid #000;
    background: linear-gradient(#fff 4px, #000 4px, #000 7px, #fff 7px);
  }

  .general {
    justify-content: space-between;
    padding: 0 7px 0 4px;
  }

  .format .cells {
    padding-left: 11px;
  }

  .five {
    font: bold 9px "Liberation Sans", sans-serif;
    fill: #444;
  }

  .style .group-body {
    padding-left: 7px;
  }

  .style .big:first-child {
    width: 56px;
  }

  .gallery {
    display: flex;
    flex-direction: column;
    align-items: center;
    gap: 3px;
    padding-top: 3px;
    margin-left: 6px;
  }

  .gallery button {
    width: 158px;
    height: 61px;
    outline: 1px dashed #bbb;
    outline-offset: -4px;
    border: 1px solid #bbb;
    font: bold 15px/18px "Liberation Serif", serif;
  }

  /* work area */
  main {
    display: flex;
    flex: 1;
    min-height: 0;
  }

  .toolbox {
    display: flex;
    flex-direction: column;
    align-items: center;
    align-self: flex-start;
    width: 28px;
    margin: 2px 0 0 3px;
    padding: 3px 0;
    border: 1px solid #bbb;
  }

  .toolbox button {
    height: 18px;
  }

  .fly {
    margin: 4px 0 4px 4px;
  }

  .toolbox hr {
    width: 24px;
    margin: 0;
    border: 0;
    border-top: 1px solid #aaa;
  }

  .toolbox .element {
    height: 23px;
  }

  .designer {
    display: flex;
    flex-direction: column;
    flex: 1;
    min-width: 0;
    padding: 0 2px 0 1px;
  }

  .page-tabs {
    flex: none;
    height: 29px;
    padding: 5px 0 0 4px;
    border-bottom: 1px solid #d2d2d2;
  }

  .page-tabs button {
    gap: 9px;
    width: 71px;
    height: 24px;
    border: 1px solid #d2d2d2;
    border-top: 2px solid #2b579a;
    border-bottom: 0;
    background: #fff;
    color: #2b579a;
    font: bold 12px/16px "Open Sans", sans-serif;
  }

  .editor {
    display: flex;
    flex: 1;
    min-height: 0;
    padding-left: 5px;
  }

  .vruler {
    position: relative;
    flex: none;
    width: 14px;
    margin: 1px 2px 0 0;
    padding-top: 10px;
    border: 1px solid #ddd;
    border-width: 0 1px;
    overflow: hidden;
    color: #666;
    font: 8px/8px Roboto, sans-serif;
    text-align: center;
  }

  .vruler div {
    display: flex;
    flex-direction: column;
    align-items: center;
    gap: 10px;
    height: 32px;
  }

  .vruler div:nth-child(5n + 3) {
    height: 31px;
  }

  .vruler i {
    width: 9px;
    height: 1px;
    background: #666;
  }

  .vruler b {
    position: absolute;
    left: 0;
    top: 179px;
    width: 14px;
    height: 19px;
    background: #c1d4f3;
    mix-blend-mode: multiply;
  }

  .surface {
    display: flex;
    flex-direction: column;
    flex: 1;
    min-width: 0;
  }

  .hruler {
    display: flex;
    flex: none;
    height: 15px;
    margin: 4px 0 2px 10px;
    color: #666;
    font: 9px/14px Roboto, sans-serif;
  }

  .margin {
    width: 47px;
    background: #e5e5e5;
  }

  .margin.end {
    width: 32px;
  }

  .scale {
    position: relative;
    width: 590px;
    border: 1px solid #e5e5e5;
    border-width: 1px 0;
  }

  .scale span {
    position: absolute;
    transform: translateX(-50%);
  }

  .scale i {
    position: absolute;
    top: 3px;
    width: 1px;
    height: 8px;
    background: #555;
  }

  .scale b {
    position: absolute;
    left: 131px;
    top: -1px;
    width: 210px;
    height: 15px;
    background: #c1d4f3;
  }

  .desk {
    flex: 1;
    min-height: 0;
    overflow: hidden;
    padding-left: 10px;
    background: #dde2ea;
  }

  .sheet {
    width: 669px;
    height: 100%;
    padding-left: 46px;
    border-left: 1px solid #777;
    border-right: 1px solid #777;
    background: #fff;
    box-shadow: 2px 0 0 #b5b9be, -1px 0 0 #a5a9ae;
  }

  .content {
    position: relative;
    width: 591px;
    height: 100%;
    border-left: 1px solid #888;
    border-right: 1px solid #888;
  }

  .grid {
    position: absolute;
    left: 0;
    top: 0;
    width: 100%;
  }

  .intro {
    position: relative;
    height: 72px;
    margin: 0 -1px;
    overflow: hidden;
    border-bottom: 1px dashed #e9a64f;
    background: rgba(253, 246, 237, 0.72);
  }

  .intro .field {
    position: absolute;
    left: 0;
    height: 19px;
  }

  .field {
    padding-left: 2px;
    font: 13px/18px "Liberation Serif", serif;
    white-space: nowrap;
  }

  /* small corner ticks of a report component */
  .marks {
    background:
      linear-gradient(#777, #777) 0 0 / 4px 1px,
      linear-gradient(#777, #777) 100% 0 / 4px 1px,
      linear-gradient(#777, #777) 0 100% / 4px 1px,
      linear-gradient(#777, #777) 100% 100% / 4px 1px,
      linear-gradient(#777, #777) 100% 0 / 1px 4px,
      linear-gradient(#777, #777) 100% 100% / 1px 4px;
    background-repeat: no-repeat;
  }

  .panel {
    position: absolute;
    left: 405px;
    top: -30px;
    width: 183px;
    height: 102px;
    padding-top: 24px;
    border: 1px dashed #777;
    color: #999;
    font: 15px/22px "Noto Sans", sans-serif;
    text-align: center;
  }

  .band {
    position: relative;
    margin: 0 -1px;
  }

  .band-head {
    height: 13px;
    padding-left: 2px;
    background: rgba(238, 154, 46, 0.84);
    font: 9px/13px "Noto Sans", sans-serif;
    white-space: nowrap;
  }

  .band-body {
    position: relative;
    border-bottom: 1px dashed #e9a64f;
    background: rgba(253, 242, 230, 0.7);
  }

  .boxed .band-body {
    border: 1px solid #000;
    background: rgba(254, 249, 243, 0.75);
  }

  .data .band-head {
    background: rgba(84, 144, 208, 0.84);
  }

  .data .band-body {
    border-bottom: 1px dotted #000;
    background: rgba(224, 240, 250, 0.75);
  }

  .item {
    position: absolute;
    overflow: hidden;
    font: 11px/20px "Liberation Serif", serif;
  }

  .boxed .item {
    margin: -1px 0 0 -1px;
  }

  .item.title {
    font-size: 12px;
    font-weight: bold;
    text-align: center;
  }

  .item.line { border-right: 1px solid #000; }
  .item.soft { border-right: 1px solid #888; }
  .item.first { border-left: 1px solid #000; }

  .item.empty {
    background: rgba(250, 228, 205, 0.45);
  }

  .item.serif {
    padding-left: 2px;
    line-height: 12px;
    white-space: normal;
  }

  .item.center {
    text-align: center;
  }

  .item.tall {
    background: rgba(255, 255, 255, 0.6);
  }

  .item.up span {
    display: block;
    margin-top: -6px;
  }

  .item.sans {
    font: 10px/12px "Liberation Sans", sans-serif;
    text-align: right;
  }

  .item.total {
    padding-left: 2px;
    font-size: 12px;
    font-weight: bold;
  }

  .item.bold {
    padding-right: 1px;
    font: bold 10px/12px "Liberation Sans", sans-serif;
    text-align: right;
  }

  .item.mid {
    padding-top: 5px;
  }

  .item.left {
    padding-left: 3px;
    text-align: left;
  }

  .item.small {
    padding-left: 2px;
    line-height: 22px;
    white-space: nowrap;
  }

  .item.row {
    border: 1px solid #000;
    border-width: 1px 0;
  }

  .item.field {
    font-size: 13px;
    line-height: 18px;
  }

  .item.say {
    font-weight: bold;
    font-style: italic;
  }

  .position {
    position: absolute;
    left: 80px;
    top: -15px;
    width: 51px;
    height: 15px;
    border-right: 1px solid #00f;
    border-bottom: 1px solid #00f;
    background: rgba(255, 255, 255, 0.65);
    color: #00f;
    font: bold 9px/15px "Liberation Sans", sans-serif;
    text-align: right;
    padding-right: 2px;
  }

  .measure {
    position: absolute;
    left: 130px;
    top: 20px;
    display: flex;
    justify-content: center;
    width: 211px;
    border: 1px solid #00f;
    border-width: 0 1px;
    background: linear-gradient(#00f, #00f) 0 50% / 100% 1px no-repeat;
    color: #00f;
    font: 10px/10px "Liberation Sans", sans-serif;
  }

  .measure span {
    padding: 0 2px;
    background: #fff;
  }

  .vscroll {
    display: flex;
    flex-direction: column;
    align-items: center;
    flex: none;
    width: 17px;
    padding: 27px 0 6px;
    border-right: 1px solid #ddd;
  }

  .vscroll i {
    width: 12px;
    height: 123px;
    margin: 67px 0 auto;
    background: #e5e5e5;
  }

  /* properties panel */
  .props {
    display: flex;
    flex-direction: column;
    flex: none;
    width: 303px;
    padding: 2px 2px 0 1px;
    font: 11px/14px "Liberation Sans", sans-serif;
  }

  .props-box {
    display: flex;
    flex-direction: column;
    flex: 1;
    min-height: 0;
    padding: 0 3px 2px 2px;
    border: 1px solid #bbb;
    border-bottom: 0;
  }

  .props-title {
    display: flex;
    align-items: center;
    gap: 10px;
    height: 18px;
    padding: 0 2px 0 4px;
  }

  .props-title h2 {
    flex: 1;
  }

  .picker {
    display: flex;
    gap: 6px;
    padding: 7px 2px 0 2px;
  }

  .picker > button {
    width: 22px;
    height: 21px;
    border: 1px solid #bbb;
  }

  .select-wrap {
    position: relative;
    flex: 1;
  }

  .select-wrap svg {
    position: absolute;
    right: 5px;
    top: 9px;
  }

  select {
    width: 100%;
    height: 22px;
    padding: 0 3px;
    appearance: none;
    border: 1px solid #707070;
    border-radius: 3px;
    background: linear-gradient(#f0f0f0, #cfcfcf);
    color: #000;
    font: inherit;
  }

  .props-tools {
    display: flex;
    align-items: center;
    gap: 2px;
    height: 31px;
    padding: 4px 0 0 4px;
  }

  .props-tools button {
    min-width: 18px;
    height: 20px;
  }

  .props-tools .pressed {
    width: 23px;
    border: 1px solid #555;
    border-radius: 3px;
    background: #e8e8e8;
  }

  .props-tools i {
    width: 1px;
    height: 20px;
    background: #888;
  }

  .props-tools i:last-of-type {
    margin: 0 5px 0 3px;
  }

  .sheet-grid {
    display: flex;
    flex: 1;
    min-height: 0;
    border: 1px solid #999;
  }

  .table-clip {
    flex: 1;
    overflow: hidden;
    background: linear-gradient(90deg, #f0f0f0 21px, #fff 21px);
  }

  table {
    width: 100%;
    margin-top: 1px;
    border-collapse: collapse;
    table-layout: fixed;
  }

  td, th {
    height: 16px;
    padding: 0 0 0 4px;
    border-bottom: 1px solid #ececec;
    font-weight: normal;
    line-height: 15px;
    text-align: left;
    white-space: nowrap;
  }

  th {
    width: 103px;
    border-right: 1px solid #ececec;
  }

  .gutter {
    width: 21px;
    padding-left: 9px;
    border: 0;
  }

  .strong {
    font-weight: bold;
  }

  .selected th {
    background: #3399ff;
    color: #fff;
  }

  .swatch {
    display: inline-block;
    width: 20px;
    height: 13px;
    margin: 0 8px 0 -2px;
    border: 1px solid #000;
    vertical-align: top;
    font: italic 11px/10px "Liberation Serif", serif;
    text-align: center;
  }

  .swatch.style {
    width: 20px;
    background: linear-gradient(#000, #000) center / 11px 5px no-repeat;
  }

  .swatch.fx {
    background: #eee;
    color: #555;
  }

  .pscroll {
    display: flex;
    flex-direction: column;
    align-items: center;
    flex: none;
    width: 17px;
    padding: 6px 0;
    background: #f0f0f0;
  }

  .pscroll i {
    width: 15px;
    height: 167px;
    margin: 8px 0 auto;
    border: 1px solid #999;
    border-radius: 2px;
    background:
      repeating-linear-gradient(#777 0 1px, #eee 1px 3px) center / 7px 8px no-repeat,
      linear-gradient(90deg, #f5f5f5, #cfcfcf);
  }

  .about {
    height: 60px;
    margin-top: 3px;
    padding: 2px 5px;
    border: 1px solid #999;
    line-height: 15px;
  }

  .props-tabs {
    display: flex;
    gap: 10px;
    height: 26px;
    padding: 0 0 3px 4px;
    font: 11px/14px Roboto, sans-serif;
  }

  .props-tabs button {
    gap: 7px;
  }

  .props-tabs .current {
    width: 82px;
    margin-right: -4px;
    border-right: 1px solid #bbb;
    border-bottom: 2px solid #2b579a;
    color: #2b579a;
  }

  /* status bar */
  .status {
    display: flex;
    align-items: center;
    flex: none;
    height: 26px;
    padding-left: 10px;
    background: #2b579a;
    color: #fff;
    font: 11px/16px "Open Sans", sans-serif;
  }

  .status > * {
    height: 16px;
  }

  .unit, .checker, .object {
    border-right: 1px solid #8ba3c9;
  }

  .unit {
    gap: 8px;
    width: 81px;
    justify-content: space-between;
    padding-right: 5px;
  }

  .checker {
    gap: 10px;
    padding: 0 9px 0 10px;
  }

  .object {
    padding: 0 8px;
  }

  .coords {
    display: flex;
    gap: 7px;
    padding-left: 4px;
  }

  .zoom {
    display: flex;
    align-items: center;
    gap: 8px;
    width: 298px;
    height: 22px;
    margin-left: auto;
    padding-left: 7px;
    border-left: 1px solid #8ba3c9;
  }

  .zoom output {
    width: 34px;
    margin-left: 6px;
    font-size: 11px;
  }

  .zoom input {
    width: 96px;
    height: 16px;
    margin: 0 -4px;
    appearance: none;
    background: linear-gradient(#7f9bc8, #7f9bc8) center / 100% 1px no-repeat;
  }

  .zoom input::-webkit-slider-thumb {
    appearance: none;
    width: 9px;
    height: 12px;
    background: #fff;
    clip-path: polygon(0 0, 100% 0, 100% 70%, 50% 100%, 0 70%);
  }

  /* taskbar */
  .taskbar {
    display: flex;
    flex: none;
    align-items: stretch;
    height: 39px;
    padding-left: 8px;
    border-top: 1px solid #a9a5b8;
    background:
      linear-gradient(90deg, #08080a 0, #08080a 152px, transparent 166px),
      linear-gradient(90deg, transparent 1203px, #0b0b0e 1216px),
      linear-gradient(90deg, transparent 676px, #8987a8 1000px, #77748f 1210px),
      linear-gradient(#9690ac 0, #aaa2bd 35%, #8e8bac 60%, #4c4554 100%);
    color: #fff;
  }

  .pin {
    width: 38px;
    margin-right: 24px;
  }

  .pin:nth-child(4) {
    margin-right: 14px;
  }

  .task {
    width: 58px;
    margin-right: 4px;
    border: 1px solid #ddd8e8;
    border-radius: 3px;
    outline: 1px solid #4c4858;
    outline-offset: 0;
    background: linear-gradient(135deg, #d6d0e3 0, #aaa4c0 50%, #8e8aa6 100%);
  }

  .task.active {
    width: 50px;
    margin-right: 12px;
    background: linear-gradient(135deg, #fff, #d8d4e2);
    box-shadow: 3px 0 0 #aaa5b8, 4px 0 0 #555, 7px 0 0 #aaa5b8, 8px 0 0 #555;
  }

  .badge {
    fill: #fff;
    font: 11px Roboto, sans-serif;
  }

  .tray {
    display: flex;
    align-items: center;
    gap: 10px;
    margin-left: auto;
    font: 12px/17px "Open Sans", sans-serif;
  }

  .en {
    margin: 0 5px 6px 0;
    font-size: 11px;
  }

  time {
    margin-left: 6px;
    font-size: 11px;
    text-align: center;
  }

  .show {
    width: 14px;
    height: 37px;
    margin-left: 3px;
    border: 1px solid #777;
    background: linear-gradient(135deg, #666, #111 60%);
  }

  /* red annotation over the whole window */
  .ink {
    position: absolute;
    left: 0;
    top: 0;
    pointer-events: none;
  }
</style>
